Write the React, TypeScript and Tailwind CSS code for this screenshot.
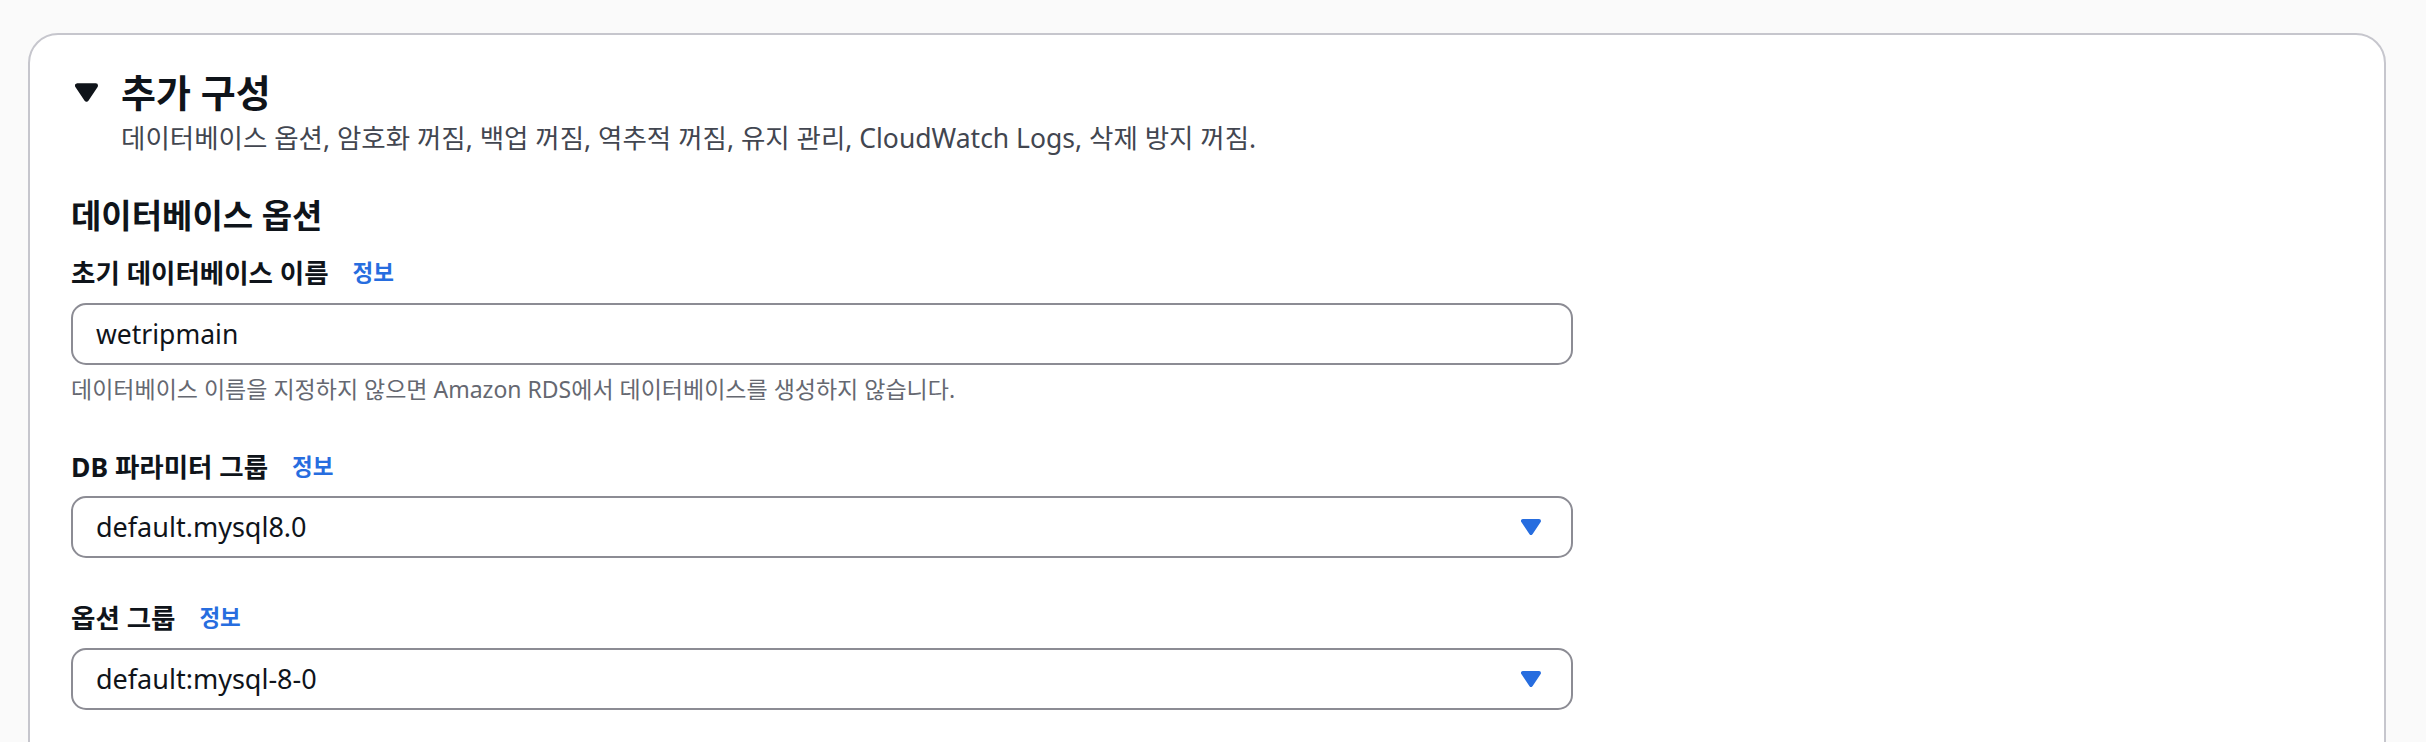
import React from "react";

const FONT = { fontFamily: '"Noto Sans", "Noto Sans CJK KR", sans-serif' };

const Caret: React.FC<{ className?: string }> = ({ className }) => (
  <svg className={className} viewBox="0 0 10 8" xmlns="http://www.w3.org/2000/svg">
    <path
      d="M1 1H9L5 7Z"
      fill="currentColor"
      stroke="currentColor"
      strokeWidth={2}
      strokeLinejoin="round"
    />
  </svg>
);

const FieldLabel: React.FC<{ text: string; className?: string }> = ({ text, className }) => (
  <div className={`flex items-center h-[34px] ${className ?? ""}`}>
    <span className="text-[26.5px] font-bold text-[#0f141a] leading-[34px]">{text}</span>
    <span className="ml-[24px] text-[22.5px] font-bold text-[#276ddf] leading-[34px]">정보</span>
  </div>
);

const SelectBox: React.FC<{ value: string; className?: string }> = ({ value, className }) => (
  <div
    className={`w-[1502px] h-[62px] border-2 border-[#8c8c94] rounded-[15px] bg-white flex items-center justify-between pl-[23px] pr-[30px] ${className ?? ""}`}
  >
    <span className="text-[27px] text-[#0f141a] leading-[34px]">{value}</span>
    <Caret className="w-[20px] h-[16px] text-[#276ddf]" />
  </div>
);

export default function App() {
  return (
    <div className="h-[742px] overflow-hidden bg-[#fafafa]" style={FONT}>
      <div className="ml-[28px] mt-[33px] w-[2358px] h-[800px] bg-white border-2 border-[#c6c6cd] rounded-[30px]">
        {/* header */}
        <div className="pt-[35px]">
          <div className="flex items-center h-[44px] pl-[45px]">
            <Caret className="w-[23px] h-[19px] text-[#0f141a]" />
            <h2 className="ml-[23px] text-[38px] font-bold text-[#0f141a] leading-[44px]">추가 구성</h2>
          </div>
          <p className="mt-[7px] pl-[91px] text-[26.5px] text-[#424650] leading-[34px]">
            데이터베이스 옵션, 암호화 꺼짐, 백업 꺼짐, 역추적 꺼짐, 유지 관리, CloudWatch Logs, 삭제 방지 꺼짐.
          </p>
        </div>

        {/* body */}
        <div className="pl-[41px] flex flex-col">
          <h3 className="mt-[41px] text-[33px] font-bold text-[#0f141a] leading-[40px]">데이터베이스 옵션</h3>

          <FieldLabel text="초기 데이터베이스 이름" className="mt-[20px]" />
          <div className="mt-[13px] w-[1502px] h-[62px] border-2 border-[#8c8c94] rounded-[15px] bg-white flex items-center pl-[23px]">
            <span className="text-[26.5px] text-[#0f141a] leading-[34px]">wetripmain</span>
          </div>
          <p className="mt-[9px] text-[23px] text-[#656871] leading-[30px]">
            데이터베이스 이름을 지정하지 않으면 Amazon RDS에서 데이터베이스를 생성하지 않습니다.
          </p>

          <FieldLabel text="DB 파라미터 그룹" className="mt-[46px]" />
          <SelectBox value="default.mysql8.0" className="mt-[12px]" />

          <FieldLabel text="옵션 그룹" className="mt-[43px]" />
          <SelectBox value="default:mysql-8-0" className="mt-[13px]" />
        </div>
      </div>
    </div>
  );
}
